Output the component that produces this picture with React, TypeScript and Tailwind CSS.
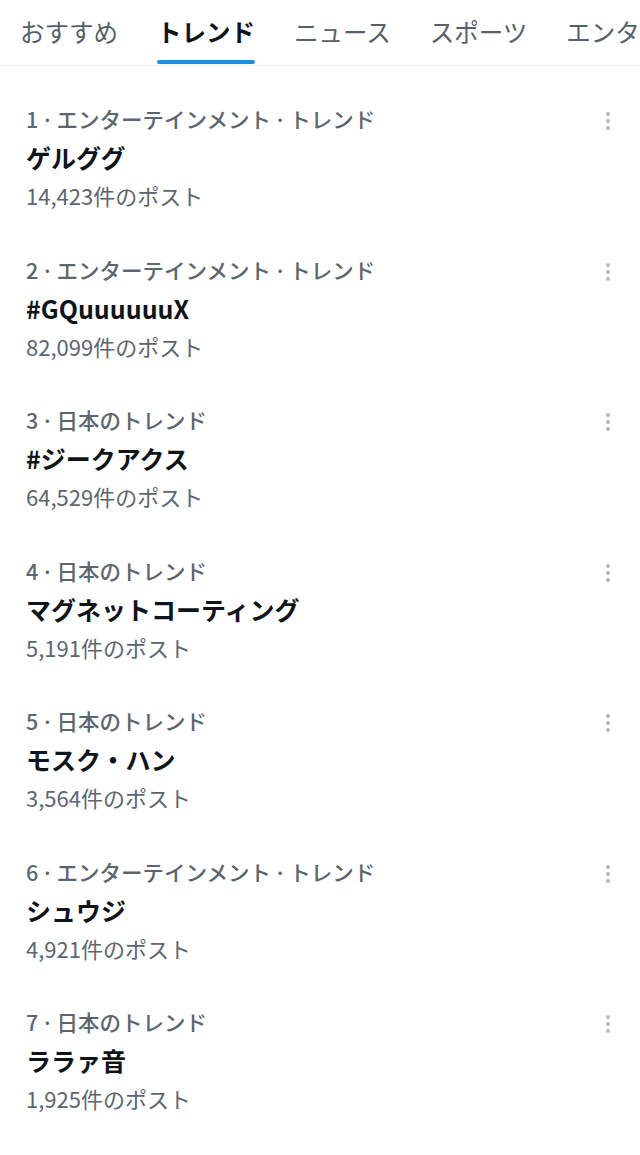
import React from 'react';

interface Trend {
  rank: number;
  category: string[];
  title: string;
  count: string;
}

const ENT = ['エンターテインメント', 'トレンド'];
const JP = ['日本のトレンド'];

const trends: Trend[] = [
  { rank: 1, category: ENT, title: 'ゲルググ', count: '14,423' },
  { rank: 2, category: ENT, title: '#GQuuuuuuX', count: '82,099' },
  { rank: 3, category: JP, title: '#ジークアクス', count: '64,529' },
  { rank: 4, category: JP, title: 'マグネットコーティング', count: '5,191' },
  { rank: 5, category: JP, title: 'モスク・ハン', count: '3,564' },
  { rank: 6, category: ENT, title: 'シュウジ', count: '4,921' },
  { rank: 7, category: JP, title: 'ララァ音', count: '1,925' },
];

const tabs = ['おすすめ', 'トレンド', 'ニュース', 'スポーツ', 'エンターテインメント'];

const font = { fontFamily: '"Noto Sans CJK JP", "Noto Sans", sans-serif' };

const MoreDots = () => (
  <div className="flex flex-col items-center gap-[3px] pt-[12px] pr-[30px]">
    <span className="w-[4px] h-[4px] rounded-full bg-[#b3b7bb]" />
    <span className="w-[4px] h-[4px] rounded-full bg-[#b3b7bb]" />
    <span className="w-[4px] h-[4px] rounded-full bg-[#b3b7bb]" />
  </div>
);

const Sep = () => <span className="mx-[3px]">·</span>;

const TrendRow: React.FC<{ trend: Trend }> = ({ trend }) => (
  <div className="flex justify-between pl-[26px] pt-[18px] pb-[18.5px]">
    <div className="flex flex-col">
      <div className="text-[21.5px] leading-[38px] font-medium text-[#5b6670] whitespace-nowrap">
        {trend.rank}
        {trend.category.map((c) => (
          <React.Fragment key={c}>
            <Sep />
            {c}
          </React.Fragment>
        ))}
      </div>
      <div className="text-[25px] leading-[38px] font-bold text-[#0f1419] whitespace-nowrap">
        {trend.title}
      </div>
      <div className="text-[22px] leading-[38px] text-[#5b6670] whitespace-nowrap">
        {trend.count}件のポスト
      </div>
    </div>
    <MoreDots />
  </div>
);

export default function App() {
  return (
    <div className="w-[640px] h-[1155px] bg-white overflow-hidden" style={font}>
      <div className="flex h-[66px] border-b border-[#eceef0] pl-[20px] gap-[39px] overflow-hidden">
        {tabs.map((t, i) => (
          <div key={t} className="relative flex items-center h-full shrink-0">
            <span
              className={`text-[24.5px] whitespace-nowrap ${
                i === 1 ? 'font-bold text-[#0f1419]' : 'text-[#56606a]'
              }`}
            >
              {t}
            </span>
            {i === 1 && (
              <span className="absolute left-0 right-0 bottom-[1px] h-[4px] rounded-full bg-[#1d8fe0]" />
            )}
          </div>
        ))}
      </div>
      <div className="pt-[16px]">
        {trends.map((t) => (
          <TrendRow key={t.rank} trend={t} />
        ))}
      </div>
    </div>
  );
}
